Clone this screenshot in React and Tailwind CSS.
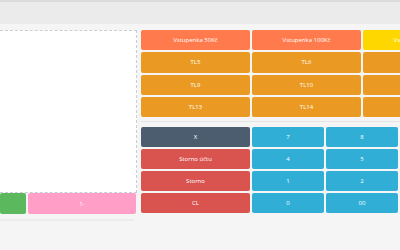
import React from 'react';

const topButtons = [
  { label: 'Vstupenka 50Kč', color: 'bg-[#ff7b4d]' },
  { label: 'Vstupenka 100Kč', color: 'bg-[#ff7b4d]' },
  { label: 'Vstupenka 200Kč', color: 'bg-[#ffd700]' },
  { label: 'TL5', color: 'bg-[#ea9a22]' },
  { label: 'TL6', color: 'bg-[#ea9a22]' },
  { label: 'TL7', color: 'bg-[#ea9a22]' },
  { label: 'TL9', color: 'bg-[#ea9a22]' },
  { label: 'TL10', color: 'bg-[#ea9a22]' },
  { label: 'TL11', color: 'bg-[#ea9a22]' },
  { label: 'TL13', color: 'bg-[#ea9a22]' },
  { label: 'TL14', color: 'bg-[#ea9a22]' },
  { label: 'TL15', color: 'bg-[#ea9a22]' },
];

const actionRows = [
  { label: 'X', color: 'bg-[#4c5d70]', keys: ['7', '8', '9'] },
  { label: 'Storno účtu', color: 'bg-[#d9534f]', keys: ['4', '5', '6'] },
  { label: 'Storno', color: 'bg-[#d9534f]', keys: ['1', '2', '3'] },
  { label: 'CL', color: 'bg-[#d9534f]', keys: ['0', '00', ','] },
];

function Key({ label, className }) {
  return (
    <button
      className={`flex items-center justify-center rounded-[2px] text-white text-[6px] leading-none ${className}`}
    >
      {label}
    </button>
  );
}

export default function App() {
  return (
    <div
      className="w-[400px] h-[250px] overflow-hidden bg-[#f5f5f5]"
      style={{ fontFamily: '"Open Sans", "Liberation Sans", sans-serif' }}
    >
      <div className="h-[24px] bg-[#ebebeb] border-t-2 border-[#dcdcdc]" />

      <div className="flex pt-[6px]">
        {/* levý panel */}
        <div className="w-[137px] shrink-0 flex flex-col">
          <div className="h-[163px] bg-white border border-l-0 border-dashed border-[#c9ced4]" />
          <div className="flex gap-[2px] h-[21px]">
            <Key label="" className="w-[26px] bg-[#5cb85c]" />
            <Key label="1-" className="w-[108px] bg-[#ff9ec6]" />
          </div>
          <div className="mt-[5px] h-[2px] w-[134px] bg-[#ececec]" />
        </div>

        {/* pravý panel */}
        <div className="ml-[4px] flex flex-col">
          <div className="grid grid-cols-[109px_109px_109px] auto-rows-[20.3px] gap-x-[2px] gap-y-[2px]">
            {topButtons.map((b) => (
              <Key key={b.label} label={b.label} className={b.color} />
            ))}
          </div>

          <div className="mt-[4px] h-px w-[270px] bg-[#e4e4e4]" />

          <div className="mt-[5px] grid grid-cols-[109px_72px_72px_72px] auto-rows-[20px] gap-x-[2px] gap-y-[2px]">
            {actionRows.map((row) => (
              <React.Fragment key={row.label}>
                <Key label={row.label} className={row.color} />
                {row.keys.map((k) => (
                  <Key key={k} label={k} className="bg-[#30aed6]" />
                ))}
              </React.Fragment>
            ))}
          </div>
        </div>
      </div>
    </div>
  );
}
